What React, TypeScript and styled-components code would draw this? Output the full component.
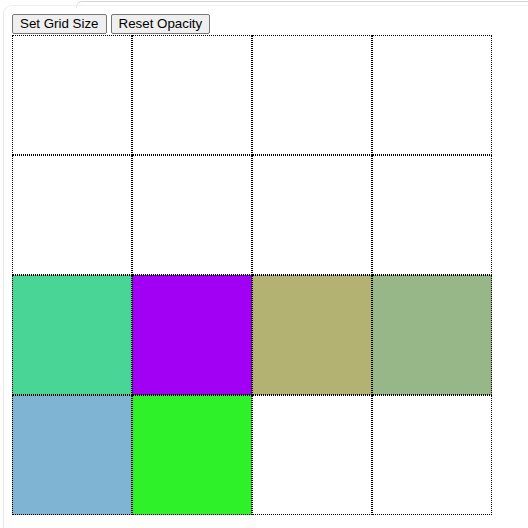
import React from "react";
import styled, { createGlobalStyle } from "styled-components";

const Global = createGlobalStyle`
  html, body { margin: 0; padding: 0; background: #ffffff; }
  body { font-family: "Liberation Sans", Arial, sans-serif; }
`;

const Frame = styled.div`
  position: relative;
  margin: 5px 0 0 3px;
  padding: 8px;
  min-height: 520px;
  border-top: 1px solid #f0f0f0;
  border-left: 1px solid #e9e9e9;
  border-top-left-radius: 9px;
  &::before {
    content: "";
    position: absolute;
    top: -5px;
    left: 72px;
    right: 0;
    height: 6px;
    border-top: 1px solid #d4d4d4;
    border-left: 1px solid #e4e4e4;
    border-top-left-radius: 6px;
  }
`;

const Toolbar = styled.div`
  display: flex;
  gap: 4px;
  height: 21px;
  align-items: flex-start;
`;

const Button = styled.button`
  font-family: "Liberation Sans", Arial, sans-serif;
  font-size: 13.33px;
  line-height: 16px;
  height: 20px;
  padding: 1px 7px;
  color: #000;
  background: #efefef;
  border: 1px solid #767676;
  border-radius: 2px;
  cursor: pointer;
`;

const Grid = styled.div`
  display: grid;
  grid-template-columns: repeat(4, 120px);
  grid-template-rows: repeat(4, 120px);
  width: 480px;
`;

const Cell = styled.div<{ $bg: string }>`
  box-sizing: border-box;
  border: 1px dotted #000;
  background: ${(p) => p.$bg};
`;

const colors = [
  "#ffffff", "#ffffff", "#ffffff", "#ffffff",
  "#ffffff", "#ffffff", "#ffffff", "#ffffff",
  "#48d596", "#a100f4", "#b4b272", "#98b788",
  "#7fb4d2", "#2ef12a", "#ffffff", "#ffffff",
];

export default function App() {
  return (
    <>
      <Global />
      <Frame>
        <Toolbar>
          <Button>Set Grid Size</Button>
          <Button>Reset Opacity</Button>
        </Toolbar>
        <Grid>
          {colors.map((c, i) => (
            <Cell key={i} $bg={c} />
          ))}
        </Grid>
      </Frame>
    </>
  );
}
